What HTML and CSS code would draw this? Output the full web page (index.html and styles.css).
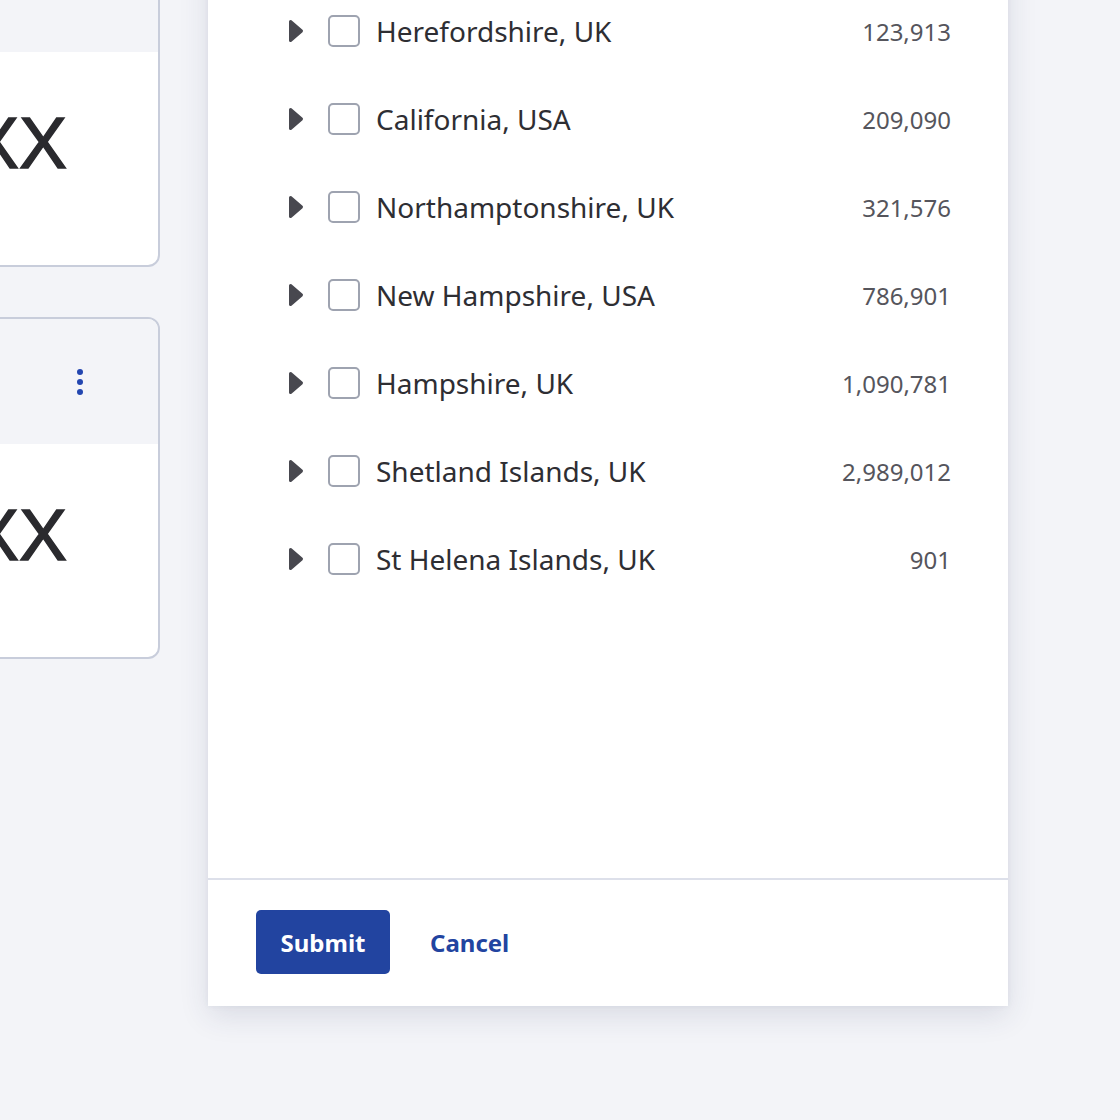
FILE: index.html
```html
<!DOCTYPE html>
<html lang="en">
<head>
	<meta charset="UTF-8">
	<title>Regions</title>
	<link rel="stylesheet" href="styles.css">
</head>
<body>
	<div class="page">
		<div class="cards">
			<div class="card">
				<div class="card-head"></div>
				<div class="card-body">XX</div>
			</div>
			<div class="card">
				<div class="card-head">
					<span class="kebab"><i></i><i></i><i></i></span>
				</div>
				<div class="card-body">XX</div>
			</div>
		</div>
		<div class="panel">
			<ul class="list">
				<li class="row">
					<svg class="caret" width="16" height="24" viewBox="0 0 16 24"><polygon points="2.5,2.5 13.5,12 2.5,21.5"/></svg>
					<span class="check"></span>
					<span class="name">Herefordshire, UK</span>
					<span class="count">123,913</span>
				</li>
				<li class="row">
					<svg class="caret" width="16" height="24" viewBox="0 0 16 24"><polygon points="2.5,2.5 13.5,12 2.5,21.5"/></svg>
					<span class="check"></span>
					<span class="name">California, USA</span>
					<span class="count">209,090</span>
				</li>
				<li class="row">
					<svg class="caret" width="16" height="24" viewBox="0 0 16 24"><polygon points="2.5,2.5 13.5,12 2.5,21.5"/></svg>
					<span class="check"></span>
					<span class="name">Northamptonshire, UK</span>
					<span class="count">321,576</span>
				</li>
				<li class="row">
					<svg class="caret" width="16" height="24" viewBox="0 0 16 24"><polygon points="2.5,2.5 13.5,12 2.5,21.5"/></svg>
					<span class="check"></span>
					<span class="name">New Hampshire, USA</span>
					<span class="count">786,901</span>
				</li>
				<li class="row">
					<svg class="caret" width="16" height="24" viewBox="0 0 16 24"><polygon points="2.5,2.5 13.5,12 2.5,21.5"/></svg>
					<span class="check"></span>
					<span class="name">Hampshire, UK</span>
					<span class="count">1,090,781</span>
				</li>
				<li class="row">
					<svg class="caret" width="16" height="24" viewBox="0 0 16 24"><polygon points="2.5,2.5 13.5,12 2.5,21.5"/></svg>
					<span class="check"></span>
					<span class="name">Shetland Islands, UK</span>
					<span class="count">2,989,012</span>
				</li>
				<li class="row">
					<svg class="caret" width="16" height="24" viewBox="0 0 16 24"><polygon points="2.5,2.5 13.5,12 2.5,21.5"/></svg>
					<span class="check"></span>
					<span class="name">St Helena Islands, UK</span>
					<span class="count">901</span>
				</li>
			</ul>
			<div class="footer">
				<button class="btn-submit">Submit</button>
				<a href="javascript:;" class="btn-cancel">Cancel</a>
			</div>
		</div>
	</div>
</body>
</html>
```

FILE: styles.css
```css
*{margin: 0px; padding: 0px; box-sizing: border-box;}
html,body{
	height: 1120px;
	overflow: hidden;
}
body{
	background-color: #f3f4f8;
	font-family: "Noto Sans", "Open Sans", sans-serif;
	color: #2e2e33;
}
.page{
	display: flex;
	align-items: flex-start;
	margin-top: -100px;
}
.cards{
	flex: none;
	width: 300px;
	margin-left: -140px;
	padding-top: 25px;
	display: flex;
	flex-direction: column;
	gap: 50px;
}
.card{
	border: 2px solid #c8cddb;
	border-radius: 12px;
	overflow: hidden;
	background-color: #fff;
}
.card-head{
	height: 125px;
	background-color: #f3f4f8;
	display: flex;
	justify-content: flex-end;
	align-items: center;
	padding-right: 75px;
}
.kebab{
	display: flex;
	flex-direction: column;
	gap: 4px;
}
.kebab i{
	display: block;
	width: 6px;
	height: 6px;
	border-radius: 50%;
	background-color: #2346b0;
}
.card-body{
	height: 213px;
	padding: 41px 91px 0 0;
	text-align: right;
	font-family: "Liberation Sans", Arial, sans-serif;
	font-size: 72px;
	line-height: 100px;
	color: #2a2a2e;
	-webkit-text-stroke: 1.4px #2a2a2e;
}
.panel{
	flex: none;
	width: 800px;
	height: 1106px;
	margin-left: 48px;
	background-color: #fff;
	box-shadow: 0 10px 28px rgba(40, 50, 90, 0.12), 0 0 6px rgba(40, 50, 90, 0.06);
	display: flex;
	flex-direction: column;
}
.list{
	flex: 1;
	list-style-type: none;
	padding: 87px 57px 0 80px;
}
.row{
	height: 88px;
	display: flex;
	align-items: center;
}
.caret{
	flex: none;
	fill: #48484f;
	stroke: #48484f;
	stroke-width: 3;
	stroke-linejoin: round;
}
.check{
	flex: none;
	width: 32px;
	height: 32px;
	margin-left: 24px;
	border: 2px solid #9ea3b0;
	border-radius: 5px;
}
.name{
	flex: 1;
	margin-left: 16px;
	font-size: 28px;
	color: #2e2e33;
}
.count{
	font-size: 24px;
	color: #55555c;
}
.footer{
	flex: none;
	height: 128px;
	border-top: 2px solid #dde0ea;
	display: flex;
	align-items: center;
	padding: 0 0 2px 48px;
	gap: 40px;
}
.btn-submit{
	width: 134px;
	height: 64px;
	border: none;
	border-radius: 5px;
	background-color: #2244a0;
	color: #fff;
	font-family: "Noto Sans", "Open Sans", sans-serif;
	font-size: 24px;
	font-weight: 700;
}
.btn-cancel{
	font-size: 24px;
	font-weight: 700;
	color: #2244a0;
	text-decoration: none;
}
```
